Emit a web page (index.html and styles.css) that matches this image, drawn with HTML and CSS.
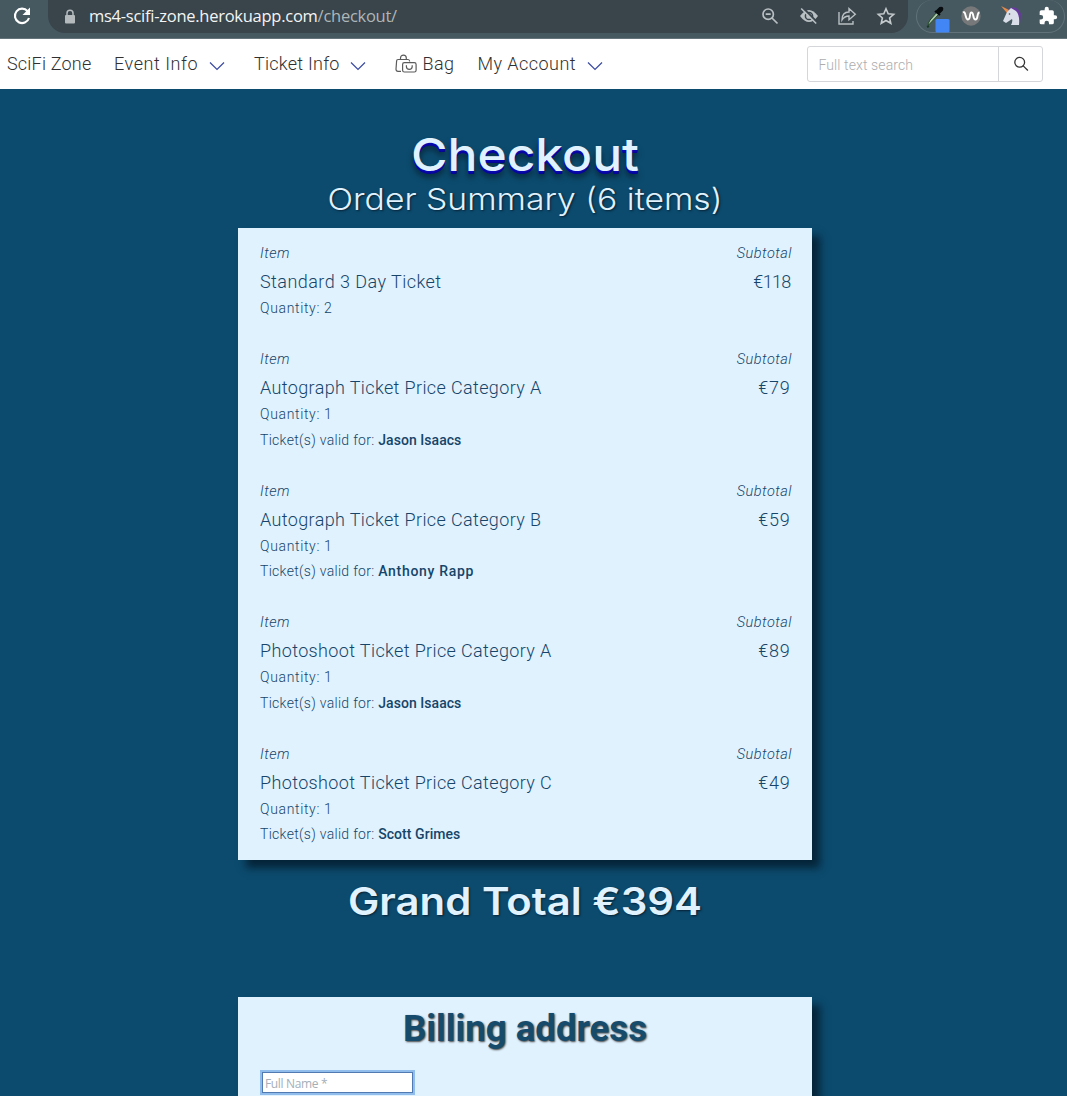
FILE: index.html
```html
<!DOCTYPE html>
<html lang="en">
<head>
<meta charset="utf-8">
<title>SciFi Zone - Checkout</title>
<link rel="stylesheet" href="styles.css">
</head>
<body>
<div class="browser">
  <svg class="reload" width="20" height="20" viewBox="0 0 20 20"><path d="M15.6 5.2A7.2 7.2 0 1 0 17 12" fill="none" stroke="#fff" stroke-width="2.1"/><path d="M18 1.500V9H10.500Z" fill="#fff"/></svg>
  <div class="address">
    <svg class="lock" width="12" height="16" viewBox="0 0 12 16"><path d="M3 7V4.200a3 3 0 0 1 6 0V7" fill="none" stroke="#b5bbbd" stroke-width="1.500"/><rect x="1" y="6" width="10" height="8.500" rx="1" fill="#b5bbbd"/></svg>
    <span class="url">ms4-scifi-zone.herokuapp.com<span class="path">/checkout/</span></span>
    <div class="tools">
      <svg width="20" height="20" viewBox="0 0 20 20" fill="none" stroke="#b9c0c3" stroke-width="1.700"><circle cx="8.200" cy="8.200" r="5.200"/><path d="M12 12l5.500 5.500M5.700 8.200h5"/></svg>
      <svg width="20" height="20" viewBox="0 0 20 20"><path d="M1 10q9-12 18 0q-9 12-18 0Z" fill="#b9c0c3"/><circle cx="10" cy="10" r="3.600" fill="none" stroke="#39444b" stroke-width="1.500"/><path d="M3.500 1.500l15 15" stroke="#39444b" stroke-width="2"/><path d="M2.200 2.500l15 15" stroke="#b9c0c3" stroke-width="1.600"/></svg>
      <svg width="20" height="20" viewBox="0 0 20 20" fill="none" stroke="#b9c0c3" stroke-width="1.400"><path d="M2 6v12h14v-3M5 14q0-8 7-8V2.500l6.300 5.800-6.300 5.400V10q-4.500 0-7 4Z"/></svg>
      <svg width="20" height="20" viewBox="0 0 20 20" fill="none" stroke="#c5cbcd" stroke-width="1.600"><path d="M10 2.800l2.200 5 5.500.5-4.100 3.700 1.200 5.300-4.800-2.800-4.800 2.800 1.200-5.300-4.100-3.700 5.500-.5Z"/></svg>
    </div>
  </div>
  <div class="extensions">
    <svg width="26" height="28" viewBox="0 0 26 28"><path d="M3 19l2-4 7-8 2 2-7.500 8-3 3Z" fill="#a9c4a8" stroke="#204827"/><path d="M10 6l5 4M12 6l3-3q3-1 2 2l-3 3Z" fill="#080c0e" stroke="#080c0e" stroke-width="2.200"/><path d="M2 22l2-1" stroke="#173b20" stroke-width="2"/><rect x="10.500" y="14" width="14" height="13.500" rx="1.500" fill="#4285f4"/></svg>
    <svg width="20" height="20" viewBox="0 0 20 20"><circle cx="10" cy="10" r="9.700" fill="#77787a"/><path d="M2 6.500c3-2 2 7 5 7s1-7 3.500-7 1 7 4 7 1-7 4-7" fill="none" stroke="#fff" stroke-width="1.900"/></svg>
    <svg width="22" height="22" viewBox="0 0 22 22"><path d="M8 4q9-5 13 5l-1 10-4-11Z" fill="#663a9c"/><path d="M1 1l8 4-2 3Z" fill="#e58b4c"/><path d="M7 7l4-4 5 3q4 4 3 14H11q2-4 1-6l-6 4-3-2Z" fill="#d9dee8"/><circle cx="9.500" cy="9" r=".8" fill="#444"/></svg>
    <svg width="20" height="20" viewBox="0 0 24 24"><path d="M20.500 11H19V7a2 2 0 0 0-2-2h-4V3.500a2.500 2.500 0 0 0-5 0V5H4a2 2 0 0 0-2 2v3.800h1.500a2.700 2.700 0 0 1 0 5.400H2V20a2 2 0 0 0 2 2h3.800v-1.500a2.700 2.700 0 0 1 5.400 0V22H17a2 2 0 0 0 2-2v-4h1.500a2.500 2.500 0 0 0 0-5Z" fill="#fff"/></svg>
  </div>
</div>
<nav class="nav">
  <a class="link brand">SciFi Zone</a>
  <a class="link event">Event Info</a><svg class="chevron" width="16" height="10" viewBox="0 0 16 10"><path d="M1 1.500l7 7 7-7"/></svg>
  <a class="link ticket">Ticket Info</a><svg class="chevron" width="16" height="10" viewBox="0 0 16 10"><path d="M1 1.500l7 7 7-7"/></svg>
  <svg class="bag-icon" width="22" height="20" viewBox="0 0 22 20" fill="none" stroke="#5b5b5b" stroke-width="1.200"><path d="M6 17.300H3q-2 0-2-2L1.600 7q0-1.500 1.500-1.500h10q1.400 0 1.600 2M5.500 5.500V4a2.900 2.900 0 0 1 5.800 0v1.500"/><rect x="7.600" y="8.700" width="13.500" height="9.300" rx="1.800"/><path d="M11.400 11.200v1.300a2.900 2.900 0 0 0 5.800 0v-1.300"/></svg>
  <a class="link bag">Bag</a>
  <a class="link account">My Account</a><svg class="chevron" width="16" height="10" viewBox="0 0 16 10"><path d="M1 1.500l7 7 7-7"/></svg>
  <div class="search"><span class="query">Full text search</span><span class="go"><svg width="16" height="16" viewBox="0 0 16 16" fill="none" stroke="#333" stroke-width="1.300"><circle cx="6.700" cy="6.300" r="4.900"/><path d="M10.200 9.900l4.700 4.600"/></svg></span></div>
</nav>
<main class="page">
  <svg class="heading" width="420" height="139" viewBox="0 0 420 139">
    <text class="title" x="96" y="82" textLength="228" lengthAdjust="spacingAndGlyphs">Checkout</text>
    <text class="subtitle" x="12.500" y="121" textLength="395" lengthAdjust="spacingAndGlyphs">Order Summary (6 items)</text>
  </svg>
  <section class="panel order">
    <article class="item">
      <div class="row label"><span>Item</span><span>Subtotal</span></div>
      <div class="row name"><span class="short">Standard 3 Day Ticket</span><span class="price narrow">€118</span></div>
      <div class="detail qty">Quantity: 2</div>
    </article>
    <article class="item">
      <div class="row label"><span>Item</span><span>Subtotal</span></div>
      <div class="row name"><span>Autograph Ticket Price Category A</span><span class="price">€79</span></div>
      <div class="detail qty">Quantity: 1</div>
      <div class="detail">Ticket(s) valid for: <b>Jason Isaacs</b></div>
    </article>
    <article class="item">
      <div class="row label"><span>Item</span><span>Subtotal</span></div>
      <div class="row name"><span>Autograph Ticket Price Category B</span><span class="price">€59</span></div>
      <div class="detail qty">Quantity: 1</div>
      <div class="detail">Ticket(s) valid for: <b class="wide">Anthony Rapp</b></div>
    </article>
    <article class="item">
      <div class="row label"><span>Item</span><span>Subtotal</span></div>
      <div class="row name"><span>Photoshoot Ticket Price Category A</span><span class="price">€89</span></div>
      <div class="detail qty">Quantity: 1</div>
      <div class="detail">Ticket(s) valid for: <b>Jason Isaacs</b></div>
    </article>
    <article class="item">
      <div class="row label"><span>Item</span><span>Subtotal</span></div>
      <div class="row name"><span>Photoshoot Ticket Price Category C</span><span class="price">€49</span></div>
      <div class="detail qty">Quantity: 1</div>
      <div class="detail">Ticket(s) valid for: <b>Scott Grimes</b></div>
    </article>
  </section>
  <svg class="total" width="420" height="137" viewBox="0 0 420 137">
    <text class="grand" x="33" y="54.500" textLength="354" lengthAdjust="spacingAndGlyphs">Grand Total €394</text>
  </svg>
  <section class="panel billing">
    <svg class="billing-head" width="300" height="73" viewBox="0 0 300 73"><text class="billing-title" x="28" y="44" textLength="244" lengthAdjust="spacingAndGlyphs">Billing address</text></svg>
    <div class="field">Full Name *</div>
  </section>
</main>
</body>
</html>
```
FILE: styles.css
```css
* { box-sizing: border-box; }
body { margin: 0; height: 1096px; overflow: hidden; background: #0c4b6e; font-family: Roboto, "Liberation Sans", sans-serif; }
svg { flex: none; display: block; }

.browser { display: flex; height: 39px; background: #475960; border-bottom: 1px solid #65747a; }
.reload { margin: 6px 16px 0 12px; }
.address { display: flex; width: 860px; height: 33px; padding-left: 16px; background: #39444b; border-radius: 0 0 17px 17px; }
.lock { margin-top: 9px; }
.url { margin-left: 13px; width: 330px; font: 16.5px/32px "Open Sans", sans-serif; letter-spacing: -0.26px; color: #f3f5f5; white-space: nowrap; }
.path { color: #aeb6b9; }
.tools { display: flex; gap: 18.500px; margin: 6px 0 0 341px; }
.extensions { display: flex; gap: 12px; width: 149px; height: 33px; margin-left: 8px; padding: 6px 0 0 6px; border: 1px solid #61727a; border-top: 0; border-radius: 17px; }
.extensions svg:first-child { margin: -1px 0 0 2px; }
.extensions svg:nth-child(2) { margin-left: -2px; }
.extensions svg:nth-child(3) { margin: -1px 0 0 7px; }
.extensions svg:nth-child(4) { margin-left: 4px; }

.nav { display: flex; align-items: center; height: 50px; padding-left: 7px; background: #fff; }
.link { font-size: 18px; font-weight: 300; line-height: 50px; white-space: nowrap; color: #303030; letter-spacing: .4px; }
.brand { width: 107px; letter-spacing: .2px; }
.event { width: 94.500px; letter-spacing: .55px; }
.ticket { width: 96px; letter-spacing: .25px; }
.account { width: 109.500px; letter-spacing: .45px; }
.bag { width: 55px; }
.chevron { margin: 3px 29.500px 0 0; fill: none; stroke: #3949a3; stroke-width: 1.2; }
.bag-icon { margin: 0 6px 0 -1px; }
.search { display: flex; width: 236px; height: 36px; margin: 0 24px 0 auto; border: 1px solid #d5d6da; border-radius: 3px; line-height: 36px; }
.query { flex: 1; padding-left: 10.500px; color: #adadaf; font-size: 14px; font-weight: 300; letter-spacing: .1px; }
.go { display: flex; align-items: center; justify-content: center; width: 44px; border-left: 1px solid #d5d6da; }

.page { width: 574px; margin-left: 238px; }
.heading { margin-left: 77px; overflow: visible; }
.title { font: 500 45.5px Inter, sans-serif; fill: #e0f2fe; text-shadow: 0 1px #0808b0, 0 2px #0808a8, 0 3px #060696, 0 6px 6px rgba(0,0,0,.55); }
.subtitle { font: 300 30px Inter, sans-serif; fill: #e0f2fe; text-shadow: 1px 1px 2px #082033; }
.panel { background: #e0f2fe; color: #164569; box-shadow: 8px 8px 8px #052438; }
.order { height: 632px; padding: 12px 22px 0; }
.item { margin-bottom: 25px; }
.row { display: flex; justify-content: space-between; }
.label { margin-right: -2px; font-size: 14.5px; font-style: italic; font-weight: 300; line-height: 27px; letter-spacing: .5px; }
.name { font-size: 18px; font-weight: 300; line-height: 29px; letter-spacing: .37px; }
.short { letter-spacing: .45px; }
.price { letter-spacing: .8px; margin-right: -.500px; }
.narrow { letter-spacing: -.7px; }
.detail { font-size: 14px; font-weight: 300; line-height: 25.300px; letter-spacing: .3px; white-space: pre; }
.qty { letter-spacing: .65px; }
.detail b { font-weight: 500; letter-spacing: .05px; }
.detail .wide { letter-spacing: .7px; }
.total { margin-left: 77px; overflow: visible; }
.grand { font: 600 38px Inter, sans-serif; fill: #e0f2fe; text-shadow: 1px 1px 2px #082033; }
.billing { height: 99px; padding: 0 22px; }
.billing-head { margin: 0 auto; overflow: visible; }
.billing-title { font: 700 37px Roboto, sans-serif; fill: #164b6b; text-shadow: 1px 1px 2px #444; }
.field { width: 155px; height: 25px; background: #fff; border: 2px solid #91bdec; box-shadow: inset 0 0 0 1px #527ab2; padding-left: 3px; font: 12px/23px "Open Sans", sans-serif; letter-spacing: -.35px; color: #a5afb8; }
```
